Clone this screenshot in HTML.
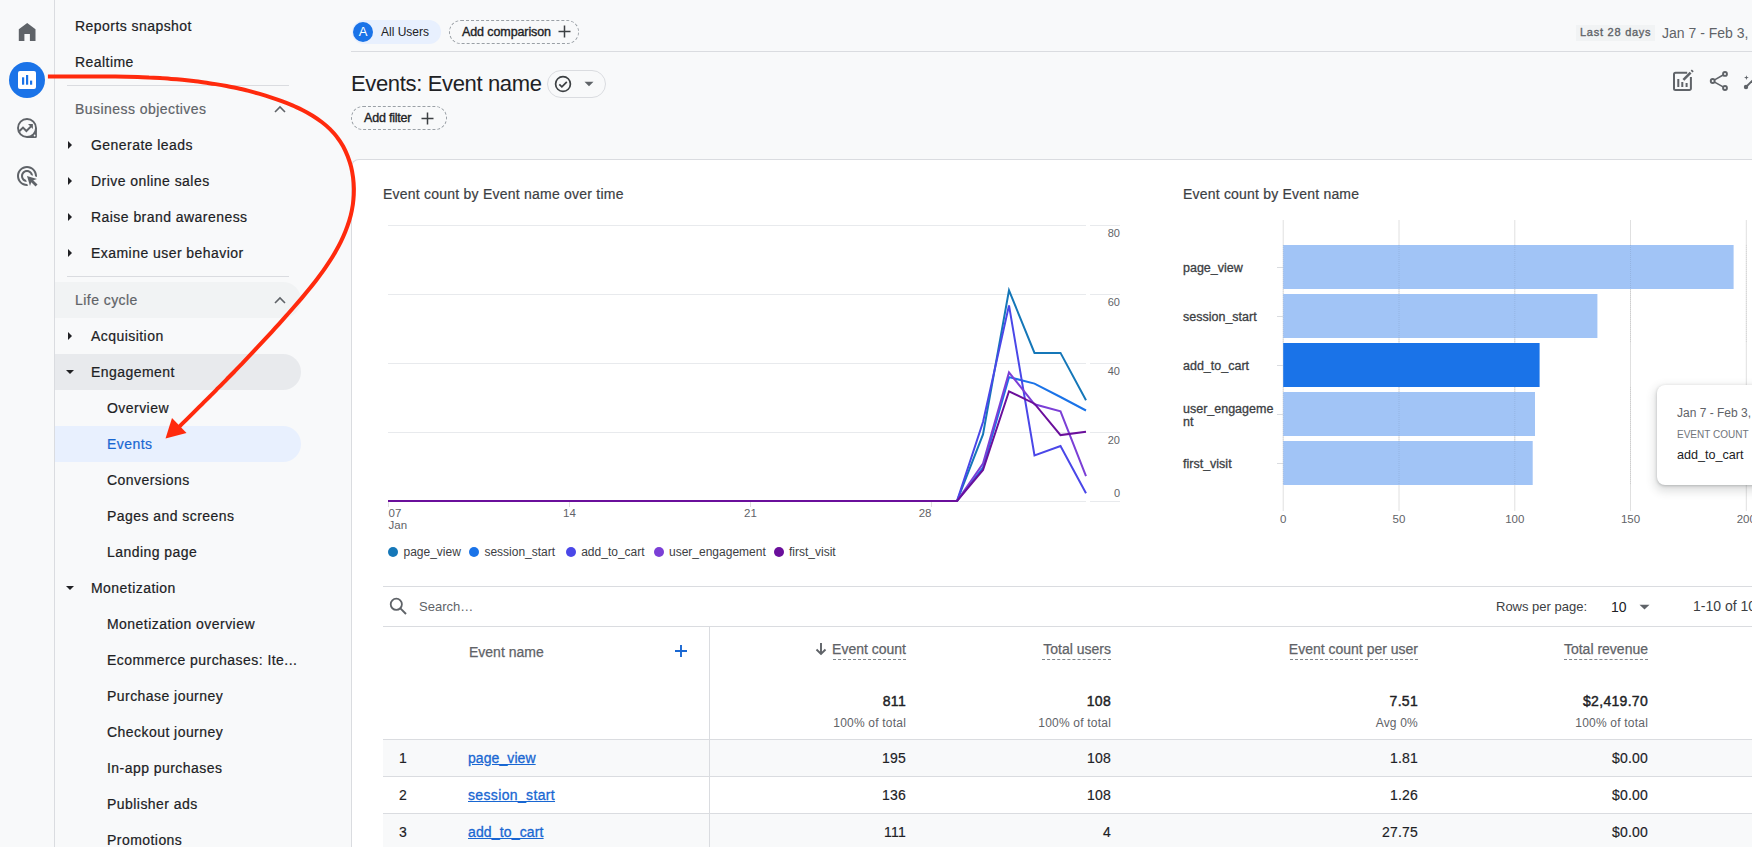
<!DOCTYPE html>
<html><head><meta charset="utf-8">
<style>
*{box-sizing:border-box;margin:0;padding:0}
html,body{width:1752px;height:847px;overflow:hidden;background:#f8f9fa;font-family:"Liberation Sans",sans-serif;color:#202124}
.a{position:absolute}
.t{position:absolute;white-space:nowrap}
.rail{left:0;top:0;width:55px;height:847px;border-right:1px solid #dadce0;background:#f8f9fa}
.nav .it{position:absolute;left:0;height:36px;line-height:36px;font-size:14px;letter-spacing:.45px;color:#202124;white-space:nowrap;-webkit-text-stroke:.2px currentColor}
.nav .l0{padding-left:75px}
.nav .l1{padding-left:91px}
.nav .l2{padding-left:107px}
.nav .grp{color:#5f6368}
.pill{position:absolute;left:55px;width:246px;height:36px;border-radius:0 18px 18px 0}
.div{position:absolute;left:67px;width:222px;height:1px;background:#dadce0}
.car{position:absolute;left:67px;width:0;height:0}
.car.r{border-top:4px solid transparent;border-bottom:4px solid transparent;border-left:4.5px solid #202124;margin-left:1px}
.car.d{border-left:4px solid transparent;border-right:4px solid transparent;border-top:4.5px solid #202124;margin-left:-1px}
.chev{position:absolute;left:274px;width:12px;height:8px}
</style></head><body>

<!-- left rail -->
<div class="a rail">
  <svg class="a" style="left:0;top:0" width="54" height="200" viewBox="0 0 54 200">
    <path d="M18.8 41V29.2L27.2 23l8.3 6.2V41h-5.6v-7h-5.5v7z" fill="#5f6368"/>
    <circle cx="27" cy="80" r="18" fill="#1a73e8"/>
    <rect x="18" y="71" width="18" height="18" rx="2" fill="#fff"/>
    <rect x="22" y="77.3" width="2.2" height="7.4" fill="#1a73e8"/>
    <rect x="26" y="75" width="2.2" height="9.7" fill="#1a73e8"/>
    <rect x="30" y="80.6" width="2.2" height="4.1" fill="#1a73e8"/>
    <!-- explore -->
    <circle cx="27" cy="128" r="9" fill="none" stroke="#5f6368" stroke-width="1.9"/>
    <path d="M36.9 128V136.4a1.5 1.5 0 0 1-1.5 1.5H27V137A9 9 0 0 0 36 128Z" fill="#5f6368"/>
    <circle cx="34.6" cy="135.5" r="0.9" fill="#f8f9fa"/>
    <path d="M19.3 131.3l3.7-3.7 3.4 3.4 4.6-4.6" fill="none" stroke="#5f6368" stroke-width="2"/>
    <path d="M28 124h4.9v4.9z" fill="#5f6368"/>
    <!-- ads click -->
    <g transform="translate(15,164) scale(1)">
      <path fill="#5f6368" d="M11.71 17.99C8.53 17.84 6 15.22 6 12c0-3.31 2.69-6 6-6 3.22 0 5.84 2.53 5.99 5.71l-2.1-.63C15.48 9.31 13.89 8 12 8c-2.21 0-4 1.790-4 4 0 1.89 1.31 3.48 3.08 3.890l.63 2.1zM22 12c0 .3-.01.6-.04.9l-1.97-.59c.01-.1.01-.21.01-.31 0-4.42-3.58-8-8-8s-8 3.58-8 8 3.58 8 8 8c.1 0 .21 0 .31-.01l.59 1.97c-.3.03-.6.04-.9.04-5.520 0-10-4.48-10-10S6.48 2 12 2s10 4.48 10 10zm-3.77 4.26L22 15l-10-3 3 10 1.26-3.77 4.27 4.27 1.98-1.98-4.28-4.26z"/>
    </g>
  </svg>
</div>

<!-- nav panel -->
<div class="nav">
  <div class="pill" style="top:282px;background:#f1f3f4"></div>
  <div class="pill" style="top:354px;background:#e8eaed"></div>
  <div class="pill" style="top:426px;background:#e8f0fe"></div>
  <div class="div" style="top:85px"></div>
  <div class="div" style="top:276px"></div>

  <div class="it l0" style="top:8px">Reports snapshot</div>
  <div class="it l0" style="top:44px">Realtime</div>
  <div class="it l0 grp" style="top:91px">Business objectives</div>
  <svg class="chev" style="top:105px" viewBox="0 0 12 8"><path d="M1 7l5-5 5 5" fill="none" stroke="#5f6368" stroke-width="1.6"/></svg>
  <div class="car r" style="top:141px"></div><div class="it l1" style="top:127px">Generate leads</div>
  <div class="car r" style="top:177px"></div><div class="it l1" style="top:163px">Drive online sales</div>
  <div class="car r" style="top:213px"></div><div class="it l1" style="top:199px">Raise brand awareness</div>
  <div class="car r" style="top:249px"></div><div class="it l1" style="top:235px">Examine user behavior</div>
  <div class="it l0 grp" style="top:282px">Life cycle</div>
  <svg class="chev" style="top:296px" viewBox="0 0 12 8"><path d="M1 7l5-5 5 5" fill="none" stroke="#5f6368" stroke-width="1.6"/></svg>
  <div class="car r" style="top:332px"></div><div class="it l1" style="top:318px">Acquisition</div>
  <div class="car d" style="top:370px"></div><div class="it l1" style="top:354px">Engagement</div>
  <div class="it l2" style="top:390px">Overview</div>
  <div class="it l2" style="top:426px;color:#1967d2">Events</div>
  <div class="it l2" style="top:462px">Conversions</div>
  <div class="it l2" style="top:498px">Pages and screens</div>
  <div class="it l2" style="top:534px">Landing page</div>
  <div class="car d" style="top:586px"></div><div class="it l1" style="top:570px">Monetization</div>
  <div class="it l2" style="top:606px">Monetization overview</div>
  <div class="it l2" style="top:642px">Ecommerce purchases: Ite...</div>
  <div class="it l2" style="top:678px">Purchase journey</div>
  <div class="it l2" style="top:714px">Checkout journey</div>
  <div class="it l2" style="top:750px">In-app purchases</div>
  <div class="it l2" style="top:786px">Publisher ads</div>
  <div class="it l2" style="top:822px">Promotions</div>
</div>


<!-- header -->
<div class="a" style="left:351px;top:51px;width:1401px;height:1px;background:#dadce0"></div>
<div class="a" style="left:352px;top:20px;width:89px;height:24px;border-radius:12px;background:#e8f0fe"></div>
<div class="a" style="left:353px;top:22px;width:20px;height:20px;border-radius:10px;background:#1a73e8;color:#fff;font-size:13px;line-height:20px;text-align:center">A</div>
<div class="t" style="left:381px;top:24px;font-size:12px;line-height:16px;color:#202124">All Users</div>
<div class="a" style="left:449px;top:20px;width:130px;height:24px;border-radius:12px;border:1px dashed #9aa0a6"></div>
<div class="t" style="left:462px;top:24px;font-size:12.5px;line-height:16px;letter-spacing:-.1px;-webkit-text-stroke:.35px #202124;color:#202124">Add comparison</div>
<svg class="a" style="left:558px;top:25px" width="13" height="13" viewBox="0 0 13 13"><path d="M6.5 0.5v12M0.5 6.5h12" stroke="#3c4043" stroke-width="1.5"/></svg>

<div class="a" style="left:1576px;top:25px;width:79px;height:16px;background:#f1f3f4"></div>
<div class="t" style="left:1580px;top:24px;font-size:11px;line-height:16px;letter-spacing:.75px;-webkit-text-stroke:.35px #5f6368;color:#5f6368">Last 28 days</div>
<div class="t" style="left:1662px;top:24px;font-size:14px;line-height:18px;color:#5f6368">Jan 7 - Feb 3, 2024</div>

<div class="t" style="left:351px;top:70px;font-size:22px;line-height:28px;letter-spacing:-.35px;color:#202124">Events: Event name</div>
<div class="a" style="left:547px;top:70px;width:59px;height:28px;border-radius:14px;border:1px solid #dadce0"></div>
<svg class="a" style="left:553px;top:74px" width="20" height="20" viewBox="0 0 20 20"><circle cx="10" cy="10" r="7.4" fill="none" stroke="#3c4043" stroke-width="1.7"/><path d="M6.3 10.3l2.6 2.6 4.9-5.1" fill="none" stroke="#3c4043" stroke-width="1.7"/></svg>
<svg class="a" style="left:584px;top:81px" width="10" height="6" viewBox="0 0 10 6"><path d="M0.5 0.8h9L5 5.3z" fill="#5f6368"/></svg>
<div class="a" style="left:351px;top:106px;width:96px;height:24px;border-radius:12px;border:1px dashed #9aa0a6"></div>
<div class="t" style="left:364px;top:110px;font-size:12.5px;line-height:16px;letter-spacing:-.2px;-webkit-text-stroke:.35px #202124;color:#202124">Add filter</div>
<svg class="a" style="left:421px;top:112px" width="13" height="13" viewBox="0 0 13 13"><path d="M6.5 0.5v12M0.5 6.5h12" stroke="#3c4043" stroke-width="1.5"/></svg>

<!-- right icons -->
<svg class="a" style="left:1660px;top:60px" width="92" height="40" viewBox="1660 60 92 40">
  <path d="M1687.2 72.8H1675.5a1.5 1.5 0 0 0-1.5 1.5V88.5a1.5 1.5 0 0 0 1.5 1.5H1689.4a1.5 1.5 0 0 0 1.5-1.5V77" fill="none" stroke="#5f6368" stroke-width="2"/>
  <path d="M1678.3 79.1V87M1682.3 82.1V87M1686.6 83.1V87" stroke="#5f6368" stroke-width="2"/>
  <path d="M1683.4 79.8L1690.6 72.6" stroke="#5f6368" stroke-width="2.6"/>
  <path d="M1691.6 71.6L1692.8 70.4" stroke="#5f6368" stroke-width="2.6"/>
  <circle cx="1725" cy="73.9" r="1.95" fill="none" stroke="#5f6368" stroke-width="1.9"/>
  <circle cx="1712.7" cy="81" r="1.95" fill="none" stroke="#5f6368" stroke-width="1.9"/>
  <circle cx="1725" cy="88" r="1.95" fill="none" stroke="#5f6368" stroke-width="1.9"/>
  <path d="M1714.6 79.9L1723.1 75M1714.6 82.1L1723.1 86.9" stroke="#5f6368" stroke-width="1.6"/>
  <path d="M1746.4 75.2l.6 1.8 1.8.6-1.8.6-.6 1.8-.6-1.8-1.8-.6 1.8-.6z" fill="#5f6368"/>
  <circle cx="1746" cy="87" r="2.2" fill="#5f6368"/>
  <path d="M1746 87L1753 80" stroke="#5f6368" stroke-width="1.9"/>
</svg>
<!-- card -->
<div class="a" style="left:351px;top:159px;width:1410px;height:700px;background:#fff;border-top:1px solid #dadce0;border-left:1px solid #dadce0;border-top-left-radius:8px"></div>

<svg id="chart" class="a" style="left:0;top:0" width="1752" height="847" viewBox="0 0 1752 847">
<text x="383" y="199.4" font-size="14" letter-spacing="0.23" fill="#3c4043" stroke="#3c4043" stroke-width="0.2">Event count by Event name over time</text>
<path d="M388 225.5H1086M1090 225.5H1120" stroke="#e8eaed" stroke-width="1"/>
<path d="M388 294.5H1086M1090 294.5H1120" stroke="#e8eaed" stroke-width="1"/>
<path d="M388 363.5H1086M1090 363.5H1120" stroke="#e8eaed" stroke-width="1"/>
<path d="M388 432.5H1086M1090 432.5H1120" stroke="#e8eaed" stroke-width="1"/>
<path d="M388 501.5H1086M1090 501.5H1120" stroke="#e8eaed" stroke-width="1"/>
<text x="1120" y="237" font-size="11" text-anchor="end" fill="#5f6368">80</text>
<text x="1120" y="306" font-size="11" text-anchor="end" fill="#5f6368">60</text>
<text x="1120" y="375" font-size="11" text-anchor="end" fill="#5f6368">40</text>
<text x="1120" y="444" font-size="11" text-anchor="end" fill="#5f6368">20</text>
<text x="1120" y="496.5" font-size="11" text-anchor="end" fill="#5f6368">0</text>
<path d="M388.5 502V507" stroke="#e0e0e0" stroke-width="1"/>
<path d="M569.5 502V507" stroke="#e0e0e0" stroke-width="1"/>
<path d="M750.5 502V507" stroke="#e0e0e0" stroke-width="1"/>
<path d="M931.5 502V507" stroke="#e0e0e0" stroke-width="1"/>
<text x="388.5" y="517" font-size="11.5" fill="#5f6368">07</text>
<text x="388.5" y="529" font-size="11.5" fill="#5f6368">Jan</text>
<text x="569.5" y="517" font-size="11.5" text-anchor="middle" fill="#5f6368">14</text>
<text x="750.5" y="517" font-size="11.5" text-anchor="middle" fill="#5f6368">21</text>
<text x="931.5" y="517" font-size="11.5" text-anchor="end" fill="#5f6368">28</text>
<path d="M388 501 L957 501 L983 434.4 L1009 290.4 L1034.5 352.9 L1060.5 352.9 L1086 400.2" fill="none" stroke="#1577b8" stroke-width="2" stroke-linejoin="miter"/>
<path d="M388 501 L957 501 L983 467.5 L1009 377.1 L1034.5 383.6 L1060.5 397 L1086 410.5" fill="none" stroke="#1a73e8" stroke-width="2" stroke-linejoin="miter"/>
<path d="M388 501 L957 501 L983 422 L1009 305.4 L1034.5 455.5 L1060.5 446 L1086 493.2" fill="none" stroke="#4a47e8" stroke-width="2" stroke-linejoin="miter"/>
<path d="M388 501 L957 501 L983 463.6 L1009 372.4 L1034.5 404.3 L1060.5 411.3 L1086 476.2" fill="none" stroke="#7b3fd6" stroke-width="2" stroke-linejoin="miter"/>
<path d="M388 501 L957 501 L983 470 L1009 391.3 L1034.5 403.7 L1060.5 435.1 L1086 431.8" fill="none" stroke="#6a0f9b" stroke-width="2" stroke-linejoin="miter"/>
<circle cx="393" cy="552" r="5" fill="#1577b8"/>
<text x="403.5" y="556" font-size="12" fill="#3c4043">page_view</text>
<circle cx="474" cy="552" r="5" fill="#1a73e8"/>
<text x="484.4" y="556" font-size="12" fill="#3c4043">session_start</text>
<circle cx="571" cy="552" r="5" fill="#4a47e8"/>
<text x="581.2" y="556" font-size="12" fill="#3c4043">add_to_cart</text>
<circle cx="659" cy="552" r="5" fill="#7b3fd6"/>
<text x="669" y="556" font-size="12" fill="#3c4043">user_engagement</text>
<circle cx="779" cy="552" r="5" fill="#6a0f9b"/>
<text x="789" y="556" font-size="12" fill="#3c4043">first_visit</text>
<text x="1183" y="199.4" font-size="14" letter-spacing="0.2" fill="#3c4043" stroke="#3c4043" stroke-width="0.2">Event count by Event name</text>
<path d="M1283.2 220V511" stroke="#e0e0e0" stroke-width="1"/>
<path d="M1399.0 220V511" stroke="#e0e0e0" stroke-width="1"/>
<path d="M1514.8 220V511" stroke="#e0e0e0" stroke-width="1"/>
<path d="M1630.5 220V511" stroke="#e0e0e0" stroke-width="1"/>
<path d="M1746.3 220V511" stroke="#e0e0e0" stroke-width="1"/>
<rect x="1283.2" y="245" width="450.4" height="44" fill="#a1c4f6"/>
<path d="M1277 267.5H1283" stroke="#dadce0" stroke-width="1"/>
<text x="1183" y="271.5" font-size="12.5" fill="#3c4043" stroke="#3c4043" stroke-width="0.3">page_view</text>
<rect x="1283.2" y="294" width="314.2" height="44" fill="#a1c4f6"/>
<path d="M1277 316.5H1283" stroke="#dadce0" stroke-width="1"/>
<text x="1183" y="320.5" font-size="12.5" fill="#3c4043" stroke="#3c4043" stroke-width="0.3">session_start</text>
<rect x="1283.2" y="343" width="256.4" height="44" fill="#1a73e8"/>
<path d="M1277 365.5H1283" stroke="#dadce0" stroke-width="1"/>
<text x="1183" y="369.5" font-size="12.5" fill="#3c4043" stroke="#3c4043" stroke-width="0.3">add_to_cart</text>
<rect x="1283.2" y="392" width="251.8" height="44" fill="#a1c4f6"/>
<path d="M1277 414.5H1283" stroke="#dadce0" stroke-width="1"/>
<text x="1183" y="412.5" font-size="12.5" fill="#3c4043" stroke="#3c4043" stroke-width="0.3">user_engageme</text>
<text x="1183" y="426" font-size="12.5" fill="#3c4043" stroke="#3c4043" stroke-width="0.3">nt</text>
<rect x="1283.2" y="441" width="249.5" height="44" fill="#a1c4f6"/>
<path d="M1277 463.5H1283" stroke="#dadce0" stroke-width="1"/>
<text x="1183" y="467.5" font-size="12.5" fill="#3c4043" stroke="#3c4043" stroke-width="0.3">first_visit</text>
<path d="M1283.2 245V343M1283.2 387V485" stroke="#000" stroke-opacity="0.08" stroke-dasharray="1 1" stroke-width="1"/>
<text x="1283.2" y="522.5" font-size="11.5" text-anchor="middle" fill="#5f6368">0</text>
<path d="M1399.0 245V343M1399.0 387V485" stroke="#000" stroke-opacity="0.08" stroke-dasharray="1 1" stroke-width="1"/>
<text x="1399.0" y="522.5" font-size="11.5" text-anchor="middle" fill="#5f6368">50</text>
<path d="M1514.8 245V343M1514.8 387V485" stroke="#000" stroke-opacity="0.08" stroke-dasharray="1 1" stroke-width="1"/>
<text x="1514.8" y="522.5" font-size="11.5" text-anchor="middle" fill="#5f6368">100</text>
<path d="M1630.5 245V343M1630.5 387V485" stroke="#000" stroke-opacity="0.08" stroke-dasharray="1 1" stroke-width="1"/>
<text x="1630.5" y="522.5" font-size="11.5" text-anchor="middle" fill="#5f6368">150</text>
<path d="M1746.3 245V343M1746.3 387V485" stroke="#000" stroke-opacity="0.08" stroke-dasharray="1 1" stroke-width="1"/>
<text x="1746.3" y="522.5" font-size="11.5" text-anchor="middle" fill="#5f6368">200</text>
</svg>
<div class="a" style="left:1657px;top:385px;width:120px;height:100px;background:#fff;border-radius:8px;box-shadow:0 1px 3px rgba(60,64,67,.3),0 4px 8px 3px rgba(60,64,67,.15)"></div>
<div class="t" style="left:1677px;top:405px;font-size:12px;line-height:16px;color:#5f6368">Jan 7 - Feb 3, 2024</div>
<div class="t" style="left:1677px;top:427px;font-size:10px;line-height:16px;color:#70757a">EVENT COUNT</div>
<div class="t" style="left:1677px;top:447px;font-size:12.6px;line-height:16px;color:#202124">add_to_cart</div>

<!--T0--><div class="a" style="left:383px;top:586px;width:1369px;height:1px;background:#dadce0"></div>
<div class="a" style="left:383px;top:626px;width:1369px;height:1px;background:#dadce0"></div>
<svg class="a" style="left:386px;top:594px" width="24" height="24" viewBox="0 0 24 24"><circle cx="10.3" cy="10.3" r="5.6" fill="none" stroke="#5f6368" stroke-width="1.8"/><path d="M14.4 14.4l5.6 5.6" stroke="#5f6368" stroke-width="1.9"/></svg>
<div class="t" style="left:419px;top:598px;font-size:13px;line-height:18px;color:#5f6368">Search…</div>
<div class="t" style="left:1496px;top:598px;font-size:13px;line-height:18px;color:#3c4043">Rows per page:</div>
<div class="t" style="left:1611px;top:598px;font-size:14px;line-height:18px;color:#202124">10</div>
<svg class="a" style="left:1639px;top:604px" width="11" height="6" viewBox="0 0 11 6"><path d="M0.5 0.8h10L5.5 5.5z" fill="#5f6368"/></svg>
<div class="t" style="left:1693px;top:597px;font-size:14px;line-height:18px;color:#3c4043">1-10 of 10</div>
<div class="t" style="left:469px;top:643px;font-size:14px;line-height:18px;color:#5f6368;-webkit-text-stroke:.25px #5f6368">Event name</div>
<svg class="a" style="left:674px;top:644px" width="14" height="14" viewBox="0 0 14 14"><path d="M7 1v12M1 7h12" stroke="#1967d2" stroke-width="1.9"/></svg>
<svg class="a" style="left:815px;top:642px" width="12" height="14" viewBox="0 0 12 14"><path d="M6 1v11M1.5 7.5L6 12l4.5-4.5" fill="none" stroke="#5f6368" stroke-width="1.9"/></svg>
<div class="t" style="right:846px;top:640px;font-size:14px;line-height:18px;color:#5f6368;-webkit-text-stroke:.25px #5f6368">Event count</div>
<div class="a" style="left:833px;top:659px;width:73px;height:0;border-top:1px dashed #80868b"></div>
<div class="t" style="right:641px;top:640px;font-size:14px;line-height:18px;color:#5f6368;-webkit-text-stroke:.25px #5f6368">Total users</div>
<div class="a" style="left:1042px;top:659px;width:69px;height:0;border-top:1px dashed #80868b"></div>
<div class="t" style="right:334px;top:640px;font-size:14px;line-height:18px;color:#5f6368;-webkit-text-stroke:.25px #5f6368">Event count per user</div>
<div class="a" style="left:1290px;top:659px;width:128px;height:0;border-top:1px dashed #80868b"></div>
<div class="t" style="right:104px;top:640px;font-size:14px;line-height:18px;color:#5f6368;-webkit-text-stroke:.25px #5f6368">Total revenue</div>
<div class="a" style="left:1564px;top:659px;width:84px;height:0;border-top:1px dashed #80868b"></div>
<div class="t" style="right:846px;top:692px;font-size:14px;line-height:18px;letter-spacing:.3px;-webkit-text-stroke:.4px #202124;color:#202124">811</div>
<div class="t" style="right:846px;top:715px;font-size:12px;line-height:16px;letter-spacing:.2px;color:#5f6368">100% of total</div>
<div class="t" style="right:641px;top:692px;font-size:14px;line-height:18px;letter-spacing:.3px;-webkit-text-stroke:.4px #202124;color:#202124">108</div>
<div class="t" style="right:641px;top:715px;font-size:12px;line-height:16px;letter-spacing:.2px;color:#5f6368">100% of total</div>
<div class="t" style="right:334px;top:692px;font-size:14px;line-height:18px;letter-spacing:.3px;-webkit-text-stroke:.4px #202124;color:#202124">7.51</div>
<div class="t" style="right:334px;top:715px;font-size:12px;line-height:16px;letter-spacing:.2px;color:#5f6368">Avg 0%</div>
<div class="t" style="right:104px;top:692px;font-size:14px;line-height:18px;letter-spacing:.3px;-webkit-text-stroke:.4px #202124;color:#202124">$2,419.70</div>
<div class="t" style="right:104px;top:715px;font-size:12px;line-height:16px;letter-spacing:.2px;color:#5f6368">100% of total</div>
<div class="a" style="left:383px;top:740px;width:1369px;height:36px;background:#f8f9fa"></div>
<div class="a" style="left:383px;top:776px;width:1369px;height:1px;background:#dadce0"></div>
<div class="t" style="left:399px;top:749px;font-size:14px;line-height:18px;color:#202124;-webkit-text-stroke:.15px #202124">1</div>
<div class="t" style="left:468px;top:749px;font-size:14px;line-height:18px;letter-spacing:0.08px;color:#1967d2;text-decoration:underline;-webkit-text-stroke:.3px #1967d2">page_view</div>
<div class="t" style="right:846px;top:749px;font-size:14px;line-height:18px;letter-spacing:.2px;color:#202124;-webkit-text-stroke:.15px #202124">195</div>
<div class="t" style="right:641px;top:749px;font-size:14px;line-height:18px;letter-spacing:.2px;color:#202124;-webkit-text-stroke:.15px #202124">108</div>
<div class="t" style="right:334px;top:749px;font-size:14px;line-height:18px;letter-spacing:.2px;color:#202124;-webkit-text-stroke:.15px #202124">1.81</div>
<div class="t" style="right:104px;top:749px;font-size:14px;line-height:18px;letter-spacing:.2px;color:#202124;-webkit-text-stroke:.15px #202124">$0.00</div>
<div class="a" style="left:383px;top:777px;width:1369px;height:36px;background:#fff"></div>
<div class="a" style="left:383px;top:813px;width:1369px;height:1px;background:#dadce0"></div>
<div class="t" style="left:399px;top:786px;font-size:14px;line-height:18px;color:#202124;-webkit-text-stroke:.15px #202124">2</div>
<div class="t" style="left:468px;top:786px;font-size:14px;line-height:18px;letter-spacing:0.35px;color:#1967d2;text-decoration:underline;-webkit-text-stroke:.3px #1967d2">session_start</div>
<div class="t" style="right:846px;top:786px;font-size:14px;line-height:18px;letter-spacing:.2px;color:#202124;-webkit-text-stroke:.15px #202124">136</div>
<div class="t" style="right:641px;top:786px;font-size:14px;line-height:18px;letter-spacing:.2px;color:#202124;-webkit-text-stroke:.15px #202124">108</div>
<div class="t" style="right:334px;top:786px;font-size:14px;line-height:18px;letter-spacing:.2px;color:#202124;-webkit-text-stroke:.15px #202124">1.26</div>
<div class="t" style="right:104px;top:786px;font-size:14px;line-height:18px;letter-spacing:.2px;color:#202124;-webkit-text-stroke:.15px #202124">$0.00</div>
<div class="a" style="left:383px;top:814px;width:1369px;height:36px;background:#f8f9fa"></div>
<div class="a" style="left:383px;top:850px;width:1369px;height:1px;background:#dadce0"></div>
<div class="t" style="left:399px;top:823px;font-size:14px;line-height:18px;color:#202124;-webkit-text-stroke:.15px #202124">3</div>
<div class="t" style="left:468px;top:823px;font-size:14px;line-height:18px;letter-spacing:0.15px;color:#1967d2;text-decoration:underline;-webkit-text-stroke:.3px #1967d2">add_to_cart</div>
<div class="t" style="right:846px;top:823px;font-size:14px;line-height:18px;letter-spacing:.2px;color:#202124;-webkit-text-stroke:.15px #202124">111</div>
<div class="t" style="right:641px;top:823px;font-size:14px;line-height:18px;letter-spacing:.2px;color:#202124;-webkit-text-stroke:.15px #202124">4</div>
<div class="t" style="right:334px;top:823px;font-size:14px;line-height:18px;letter-spacing:.2px;color:#202124;-webkit-text-stroke:.15px #202124">27.75</div>
<div class="t" style="right:104px;top:823px;font-size:14px;line-height:18px;letter-spacing:.2px;color:#202124;-webkit-text-stroke:.15px #202124">$0.00</div>
<div class="a" style="left:383px;top:739px;width:1369px;height:1px;background:#dadce0"></div>
<div class="a" style="left:709px;top:627px;width:1px;height:220px;background:#dadce0"></div><!--T1-->
<svg class="a" style="left:0;top:0;pointer-events:none" width="1752" height="847" viewBox="0 0 1752 847">
<path d="M47.9 76.4C51.7 76.4 55.5 76.4 59.2 76.4C63.0 76.4 66.8 76.4 70.5 76.4C74.3 76.4 78.0 76.4 81.8 76.4C85.5 76.5 89.3 76.5 93.0 76.5C96.8 76.5 100.5 76.5 104.2 76.5C108.0 76.5 111.7 76.6 115.4 76.6C119.2 76.7 122.9 76.7 126.6 76.8C130.4 76.9 134.1 77.0 137.8 77.1C141.5 77.2 145.2 77.4 149.0 77.6C152.7 77.7 156.4 77.9 160.1 78.1C163.8 78.3 167.5 78.6 171.2 78.9C174.9 79.2 178.6 79.5 182.3 79.8C186.0 80.2 189.7 80.6 193.4 81.0C197.1 81.4 200.8 81.9 204.5 82.4C208.2 82.9 211.9 83.5 215.6 84.1C219.3 84.7 222.9 85.3 226.6 86.0C230.3 86.7 234.0 87.5 237.7 88.3C241.3 89.1 245.0 90.0 248.7 90.9C252.4 91.9 256.0 92.9 259.7 93.9C263.4 95.0 267.0 96.1 270.7 97.3C274.4 98.5 278.0 99.7 281.7 101.1C285.3 102.4 288.9 103.8 292.4 105.3C296.0 106.8 299.4 108.5 302.8 110.2C306.2 111.9 309.5 113.8 312.6 115.7C315.8 117.7 318.8 119.8 321.7 122.0C324.6 124.2 327.4 126.6 330.0 129.1C332.6 131.7 335.0 134.3 337.1 137.2C339.3 140.0 341.3 143.1 343.1 146.2C344.8 149.4 346.4 152.8 347.7 156.2C349.0 159.7 350.2 163.2 351.1 166.8C352.0 170.4 352.6 174.1 353.1 177.8C353.6 181.5 353.8 185.2 353.9 188.9C353.9 192.6 353.8 196.3 353.4 199.9C353.1 203.5 352.5 207.1 351.8 210.6C351.1 214.2 350.2 217.7 349.1 221.2C348.0 224.6 346.8 228.1 345.4 231.5C344.0 234.9 342.5 238.3 340.9 241.6C339.3 244.9 337.5 248.2 335.6 251.5C333.8 254.8 331.8 258.0 329.7 261.2C327.6 264.4 325.5 267.6 323.3 270.7C321.0 273.8 318.7 276.9 316.4 280.0C314.0 283.1 311.6 286.1 309.2 289.1C306.7 292.1 304.2 295.1 301.7 298.1C299.2 301.0 296.7 303.9 294.2 306.8C291.7 309.7 289.2 312.6 286.6 315.4C284.1 318.2 281.6 321.0 279.1 323.8C276.6 326.6 274.1 329.3 271.6 332.1C269.1 334.8 266.6 337.5 264.1 340.2C261.6 342.9 259.1 345.6 256.6 348.2C254.1 350.9 251.6 353.6 249.1 356.2C246.6 358.8 244.1 361.5 241.6 364.1C239.0 366.7 236.5 369.4 234.0 372.0C231.4 374.6 228.8 377.2 226.3 379.8C223.7 382.5 221.1 385.1 218.5 387.7C215.9 390.3 213.3 393.0 210.6 395.6C208.0 398.3 205.3 400.9 202.6 403.6C199.9 406.2 197.2 408.9 194.5 411.6C191.8 414.3 189.0 417.0 186.2 419.8C183.4 422.5 180.6 425.2 177.8 428.0" fill="none" stroke="#ff2a0d" stroke-width="4" stroke-linecap="butt"/>
<path d="M165.5 438.5 L172 418 L186.5 433 Z" fill="#ff2a0d"/>
</svg>

</body></html>
